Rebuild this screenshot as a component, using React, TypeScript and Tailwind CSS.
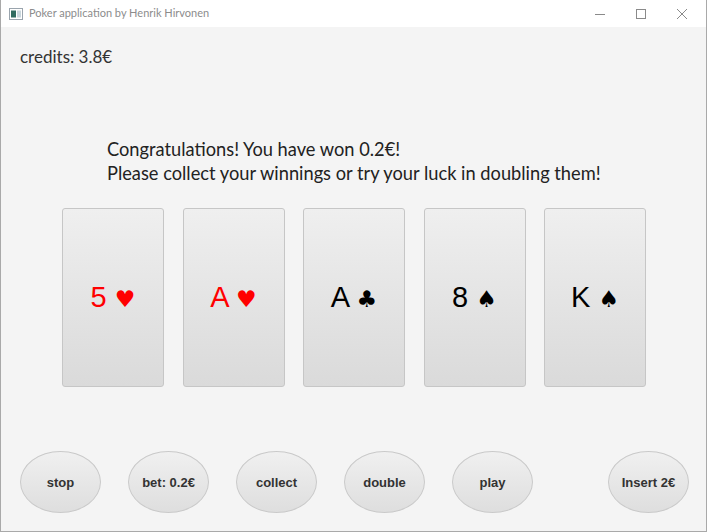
import React from 'react';

type Card = { rank: string; suit: string; red: boolean };

const cards: Card[] = [
  { rank: '5', suit: '♥', red: true },
  { rank: 'A', suit: '♥', red: true },
  { rank: 'A', suit: '♣', red: false },
  { rank: '8', suit: '♠', red: false },
  { rank: 'K', suit: '♠', red: false },
];

function TitleBar() {
  return (
    <div className="flex items-center h-[27px] bg-white shrink-0">
      {/* app icon */}
      <svg width="14" height="12" viewBox="0 0 14 12" className="ml-[8px] mr-[6px]">
        <rect x="0.5" y="0.5" width="13" height="11" fill="#fff" stroke="#9aa4ad" />
        <rect x="2" y="2.5" width="5" height="7" fill="#2f6b5f" />
        <rect x="8" y="2.5" width="4" height="7" fill="#c9d6dc" />
      </svg>
      <span className="text-[11px] text-[#8c8c8c] font-['Lato','Liberation_Sans',sans-serif]">
        Poker application by Henrik Hirvonen
      </span>
      <div className="ml-auto flex items-center h-full">
        <div className="w-[41px] h-full flex items-center justify-center">
          <svg width="10" height="10" viewBox="0 0 10 10">
            <line x1="0" y1="5.5" x2="10" y2="5.5" stroke="#8a8a8a" strokeWidth="1" />
          </svg>
        </div>
        <div className="w-[41px] h-full flex items-center justify-center">
          <svg width="10" height="10" viewBox="0 0 10 10">
            <rect x="0.5" y="0.5" width="9" height="9" fill="none" stroke="#8a8a8a" strokeWidth="1" />
          </svg>
        </div>
        <div className="w-[41px] h-full flex items-center justify-center mr-[4px]">
          <svg width="10" height="10" viewBox="0 0 10 10">
            <path d="M0 0 L10 10 M10 0 L0 10" stroke="#8a8a8a" strokeWidth="1" />
          </svg>
        </div>
      </div>
    </div>
  );
}

function PlayingCard({ card }: { card: Card }) {
  return (
    <div className="w-[102px] h-[179px] rounded-[3px] border border-[#c6c6c6] bg-gradient-to-b from-[#efefef] to-[#dadada] flex items-center justify-center">
      <span
        className={`text-[29px] font-['Liberation_Sans','DejaVu_Sans',sans-serif] ${
          card.red ? 'text-[#ff0000]' : 'text-black'
        }`}
      >
        {card.rank} <span className="text-[23px] font-['DejaVu_Sans',sans-serif]">{card.suit}</span>
      </span>
    </div>
  );
}

function OvalButton({ label, className = '' }: { label: string; className?: string }) {
  return (
    <div
      className={`w-[81px] h-[62px] pt-[2px] rounded-[50%] border border-[#c9c9c9] bg-gradient-to-b from-[#f0f0f0] to-[#dedede] flex items-center justify-center text-[13px] font-bold text-[#333] font-['Liberation_Sans',sans-serif] ${className}`}
    >
      {label}
    </div>
  );
}

export default function App() {
  return (
    <div className="w-[707px] h-[532px] flex flex-col bg-[#f4f4f4] border-l border-r border-b border-[#a9a9a9] overflow-hidden">
      <TitleBar />

      <div className="flex flex-col font-['Lato','Open_Sans',sans-serif] text-[#333]">
        <div className="mt-[19px] ml-[19px] text-[17px] leading-[22px]">credits: 3.8€</div>

        <div className="mt-[69px] ml-[106px] text-[18.25px] leading-[24px] text-[#222]">
          <div>Congratulations! You have won 0.2€!</div>
          <div>Please collect your winnings or try your luck in doubling them!</div>
        </div>

        <div className="mt-[23px] ml-[61px] flex gap-[18.5px]">
          {cards.map((c, i) => (
            <PlayingCard key={i} card={c} />
          ))}
        </div>

        <div className="mt-[64px] ml-[19px] flex gap-[27px]">
          <OvalButton label="stop" />
          <OvalButton label="bet: 0.2€" />
          <OvalButton label="collect" />
          <OvalButton label="double" />
          <OvalButton label="play" />
          <OvalButton label="Insert 2€" className="ml-[48px]" />
        </div>
      </div>
    </div>
  );
}
